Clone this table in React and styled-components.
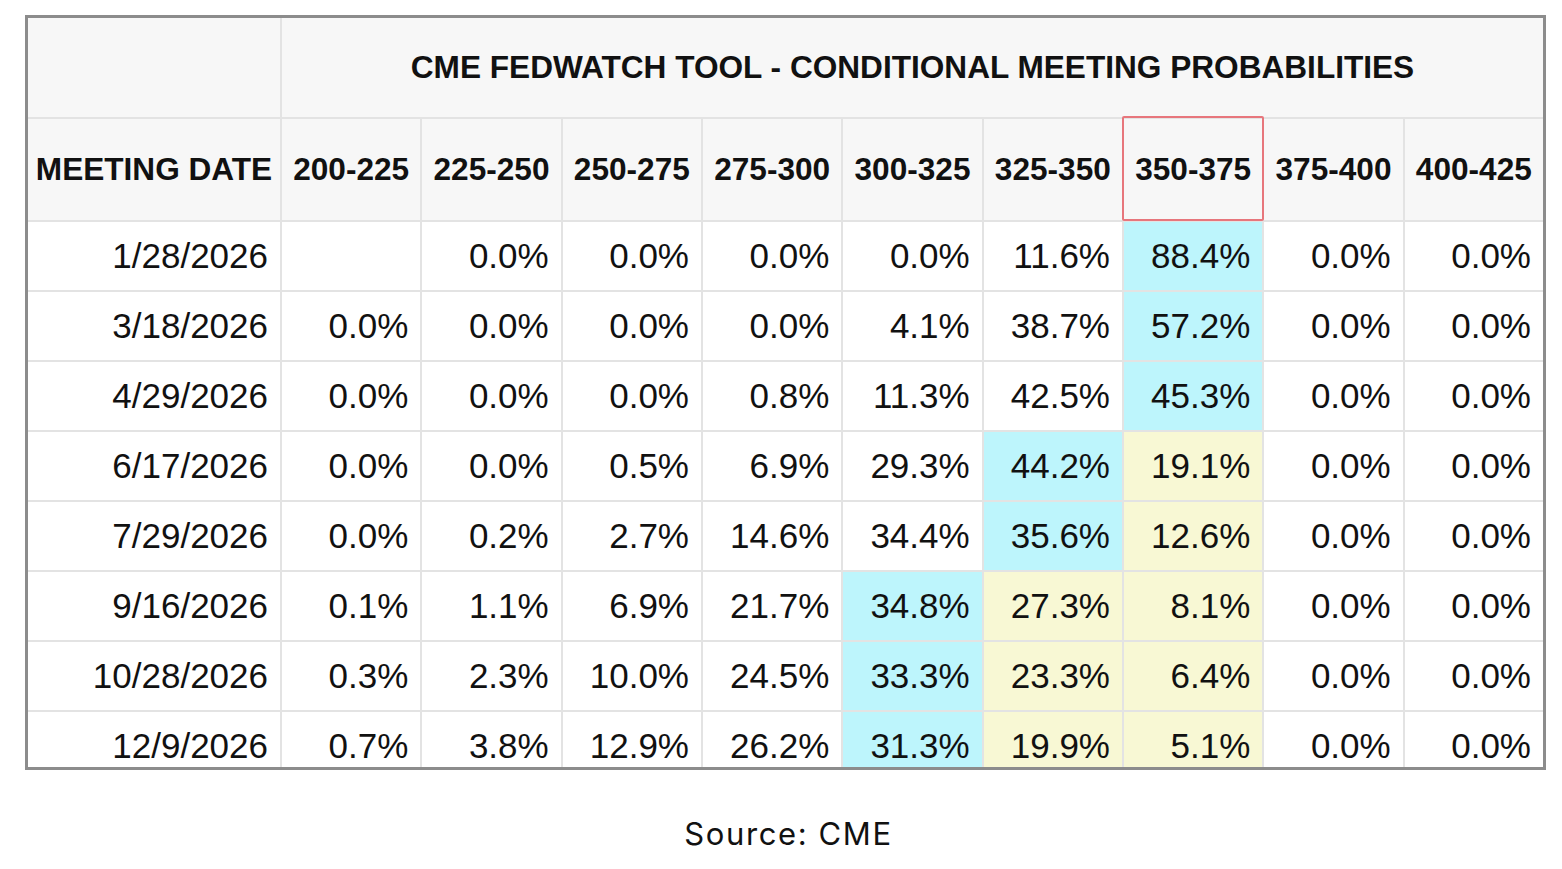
import React from 'react';
import styled, { createGlobalStyle } from 'styled-components';

const ranges = ['200-225', '225-250', '250-275', '275-300', '300-325', '325-350', '350-375', '375-400', '400-425'];
const target = 6;

const rows = [
  ['1/28/2026', '', '0.0%', '0.0%', '0.0%', '0.0%', '11.6%', '88.4%', '0.0%', '0.0%'],
  ['3/18/2026', '0.0%', '0.0%', '0.0%', '0.0%', '4.1%', '38.7%', '57.2%', '0.0%', '0.0%'],
  ['4/29/2026', '0.0%', '0.0%', '0.0%', '0.8%', '11.3%', '42.5%', '45.3%', '0.0%', '0.0%'],
  ['6/17/2026', '0.0%', '0.0%', '0.5%', '6.9%', '29.3%', '44.2%', '19.1%', '0.0%', '0.0%'],
  ['7/29/2026', '0.0%', '0.2%', '2.7%', '14.6%', '34.4%', '35.6%', '12.6%', '0.0%', '0.0%'],
  ['9/16/2026', '0.1%', '1.1%', '6.9%', '21.7%', '34.8%', '27.3%', '8.1%', '0.0%', '0.0%'],
  ['10/28/2026', '0.3%', '2.3%', '10.0%', '24.5%', '33.3%', '23.3%', '6.4%', '0.0%', '0.0%'],
  ['12/9/2026', '0.7%', '3.8%', '12.9%', '26.2%', '31.3%', '19.9%', '5.1%', '0.0%', '0.0%'],
];

// max probability gets cyan, the steps between it and the current target get yellow
const toneFor = (values, i) => {
  const nums = values.map((v) => parseFloat(v) || 0);
  const max = nums.indexOf(Math.max(...nums));
  if (i === max) return 'cyan';
  if (i > max && i <= target) return 'yellow';
  return 'plain';
};

const App = () => {
  return (
    <Page>
      <GlobalStyle />
      <Frame>
        <Grid>
          <HeadCell />
          <TitleCell>CME FEDWATCH TOOL - CONDITIONAL MEETING PROBABILITIES</TitleCell>
          <HeadCell>MEETING DATE</HeadCell>
          {ranges.map((r, i) => (
            <HeadCell key={r} $marked={i === target}>{r}</HeadCell>
          ))}
          {rows.map(([date, ...values]) => (
            <React.Fragment key={date}>
              <Cell>{date}</Cell>
              {values.map((v, i) => (
                <Cell key={i} $tone={toneFor(values, i)}>{v}</Cell>
              ))}
            </React.Fragment>
          ))}
        </Grid>
      </Frame>
      <Source>Source: CME</Source>
    </Page>
  );
};

export default App;

const GlobalStyle = createGlobalStyle`
  body {
    margin: 0;
    background: #ffffff;
  }
`;

const Page = styled.div`
  width: 1562px;
  height: 869px;
  box-sizing: border-box;
  padding: 15px 16px 0 25px;
  display: flex;
  flex-direction: column;
  align-items: flex-start;
`;

const Frame = styled.div`
  width: 1521px;
  height: 755px;
  box-sizing: border-box;
  border: 3px solid #8c8c8c;
  overflow: hidden;
  background: #e3e3e3;
`;

const Grid = styled.div`
  display: grid;
  grid-template-columns: 252px repeat(9, 1fr);
  grid-template-rows: 99px 101px repeat(8, 68px);
  gap: 2px;
  background: #e3e3e3;
  font-family: 'Liberation Sans', Arial, sans-serif;
  color: #111111;
`;

const HeadCell = styled.div`
  position: relative;
  display: flex;
  align-items: center;
  justify-content: center;
  background: #f7f7f7;
  font-size: 31.6px;
  font-weight: 700;
  white-space: nowrap;

  ${({ $marked }) => $marked && `
    &::after {
      content: '';
      position: absolute;
      top: -3px;
      bottom: -1px;
      left: -2px;
      right: -2px;
      border: 2px solid #e7767c;
      border-radius: 2px;
      z-index: 1;
    }
  `}
`;

const TitleCell = styled(HeadCell)`
  grid-column: 2 / span 9;
`;

const toneColors = {
  plain: '#ffffff',
  cyan: '#bdf5fc',
  yellow: '#f8f8d4',
};

const Cell = styled.div`
  display: flex;
  align-items: center;
  justify-content: flex-end;
  padding-right: 12px;
  background: ${({ $tone }) => toneColors[$tone || 'plain']};
  font-size: 35px;
  white-space: nowrap;
`;

const Source = styled.div`
  align-self: center;
  margin-top: 45px;
  margin-left: 6px;
  font-family: Inter, 'Noto Sans', sans-serif;
  font-size: 31px;
  letter-spacing: 1.6px;
  color: #111111;
`;
